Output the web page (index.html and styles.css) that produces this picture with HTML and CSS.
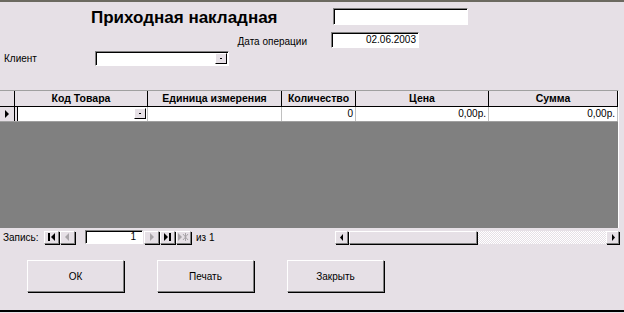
FILE: index.html
```html
<!DOCTYPE html>
<html>
    <head>
        <title>Приходная накладная</title>
        <meta charset="UTF-8">
        <link rel="stylesheet" href="styles.css">
    </head>
    <body>
        <div class="form">
            <div class="head">
                <div class="row r1">
                    <h1 class="title">Приходная накладная</h1>
                    <div class="field wide"></div>
                </div>
                <div class="row r2">
                    <span class="lbl date-lbl">Дата операции</span>
                    <div class="field date">02.06.2003</div>
                </div>
                <div class="row r3">
                    <span class="lbl client-lbl">Клиент</span>
                    <div class="field combo"><span class="drop"><i></i></span></div>
                </div>
            </div>

            <div class="grid">
                <div class="cols thead">
                    <div class="sel"></div>
                    <div>Код Товара</div>
                    <div>Единица измерения</div>
                    <div>Количество</div>
                    <div>Цена</div>
                    <div>Сумма</div>
                </div>
                <div class="cols trow">
                    <div class="sel"><span class="arrow"></span></div>
                    <div class="cur"><span class="drop"><i></i></span></div>
                    <div></div>
                    <div class="num">0</div>
                    <div class="num">0,00р.</div>
                    <div class="num">0,00р.</div>
                </div>
                <div class="empty"></div>
            </div>

            <div class="nav">
                <span class="rec">Запись:</span>
                <span class="nbtn"><svg width="9" height="8"><rect x="1" y="0" width="2" height="8"/><path d="M8 0v8L4 4z"/></svg></span>
                <span class="nbtn off"><svg width="9" height="8"><path d="M6 0v8L2 4z"/></svg></span>
                <span class="field recno">1</span>
                <span class="nbtn off"><svg width="9" height="8"><path d="M3 0v8l4-4z"/></svg></span>
                <span class="nbtn"><svg width="9" height="8"><path d="M1 0v8l4-4z"/><rect x="6" y="0" width="2" height="8"/></svg></span>
                <span class="nbtn off"><svg width="11" height="8"><path d="M0 0v8l4-4z"/><path d="M5 1l5 6M10 1l-5 6M7.5 0v8" stroke="#a8a4a8" fill="none"/></svg></span>
                <span class="of">из 1</span>
                <div class="hscroll">
                    <span class="sbtn"><svg width="4" height="7"><path d="M3 0v7L0 3.5z"/></svg></span>
                    <span class="thumb"></span>
                    <span class="track"></span>
                    <span class="sbtn"><svg width="4" height="7"><path d="M1 0v7l3-3.5z"/></svg></span>
                </div>
            </div>

            <div class="buttons">
                <button class="btn">ОК</button>
                <button class="btn">Печать</button>
                <button class="btn">Закрыть</button>
            </div>
        </div>
    </body>
</html>
```

FILE: styles.css
```css
* {
    margin: 0;
    padding: 0;
    box-sizing: border-box;
}

body {
    background: #e6e0e6;
    font-family: "Liberation Sans", Arial, sans-serif;
    font-size: 11px;
    color: #000;
}

.form {
    width: 624px;
    height: 312px;
    border-top: 2px solid #6c6a60;
    border-bottom: 2px solid #000;
}

/* шапка формы */
.row {
    display: flex;
    align-items: center;
}

.r1 {
    align-items: flex-start;
    padding-top: 6px;
}

.title {
    width: 242px;
    margin-left: 91px;
    font-size: 17px;
    line-height: 19px;
    font-weight: bold;
}

.field {
    background: #fff;
    border: 1px solid;
    border-color: #808080 #fff #fff #808080;
    box-shadow: inset 1px 1px 0 #000;
}

.wide {
    width: 135px;
    height: 17px;
}

.r2 {
    margin-top: 5px;
}

.date-lbl {
    width: 307px;
    text-align: right;
    font-size: 10px;
    padding-top: 2px;
}

.date {
    width: 88px;
    height: 16px;
    margin-left: 24px;
    text-align: right;
    font-size: 10px;
    line-height: 14px;
    padding-right: 2px;
}

.r3 {
    margin-top: 3px;
}

.client-lbl {
    width: 95px;
    padding-left: 4px;
    font-size: 10px;
}

.combo {
    position: relative;
    width: 134px;
    height: 15px;
}

.drop {
    position: absolute;
    right: 1px;
    top: 1px;
    width: 12px;
    height: 11px;
    background: #e6e0e6;
    border: 1px solid;
    border-color: #fff #000 #000 #fff;
}

.drop i {
    position: absolute;
    left: 4px;
    top: 4px;
    width: 2px;
    height: 1px;
    background: #000;
}

/* таблица */
.grid {
    width: 619px;
    margin-top: 24px;
    border-top: 1px solid #a0a0a0;
    border-right: 1px solid #fff;
}

.cols {
    display: grid;
    grid-template-columns: 15px 133px 134px 74px 133px 129px;
}

.thead {
    height: 16px;
    border-bottom: 1px solid #000;
}

.thead div {
    border-right: 1px solid #000;
    text-align: center;
    font-weight: bold;
    font-size: 10.5px;
    line-height: 15px;
}

.trow {
    height: 15px;
    border-bottom: 1px solid #a0a0a0;
}

.trow div {
    position: relative;
    background: #fff;
    border-right: 1px solid #c0c0c0;
    font-size: 10px;
    line-height: 14px;
}

.trow .sel {
    background: #e6e0e6;
    border-right: 1px solid #000;
}

.arrow {
    position: absolute;
    left: 5px;
    top: 3px;
    border-left: 4px solid #000;
    border-top: 4px solid transparent;
    border-bottom: 4px solid transparent;
}

.trow .cur {
    border-left: 2px solid #e6e0e6;
    box-shadow: inset 1px 0 0 #000;
}

.trow .cur .drop {
    top: 1px;
    right: 1px;
}

.trow .num {
    text-align: right;
    padding-right: 2px;
}

.empty {
    height: 106px;
    background: #808080;
}

/* навигация */
.nav {
    display: flex;
    align-items: center;
    width: 619px;
    height: 18px;
    padding-left: 3px;
    font-size: 10px;
}

.rec {
    width: 41px;
}

.nbtn {
    display: flex;
    align-items: center;
    justify-content: center;
    width: 15px;
    height: 13px;
    border: 1px solid;
    border-color: #fff #808080 #808080 #fff;
    box-shadow: 1px 1px 0 #000;
    margin-right: 1px;
}

.nbtn svg {
    fill: #000;
}

.nbtn.off svg {
    fill: #a8a4a8;
}

.recno {
    width: 58px;
    height: 14px;
    margin: 0 1px 0 9px;
    text-align: right;
    line-height: 12px;
    padding-right: 6px;
}

.of {
    margin-left: 4px;
}

.hscroll {
    display: flex;
    height: 13px;
    width: 284px;
    margin-left: auto;
}

.sbtn {
    display: flex;
    align-items: center;
    justify-content: center;
    width: 13px;
    border: 1px solid;
    border-color: #fff #808080 #808080 #fff;
    box-shadow: 1px 1px 0 #000;
}

.thumb {
    width: 128px;
    margin-left: 1px;
    border: 1px solid;
    border-color: #fff #808080 #808080 #fff;
    box-shadow: 1px 1px 0 #000;
}

.track {
    flex: 1;
    margin-left: 1px;
    background: repeating-conic-gradient(#fff 0 25%, #e6e0e6 0 50%) 0 0 / 2px 2px;
}

/* кнопки */
.buttons {
    display: flex;
    gap: 33px;
    padding-left: 27px;
    margin-top: 14px;
}

.btn {
    width: 97px;
    height: 32px;
    background: #e6e0e6;
    border: 1px solid;
    border-color: #fff #808080 #808080 #fff;
    box-shadow: 1px 1px 0 #000;
    font-family: "Liberation Sans", Arial, sans-serif;
    font-size: 10px;
    color: #000;
}
```
